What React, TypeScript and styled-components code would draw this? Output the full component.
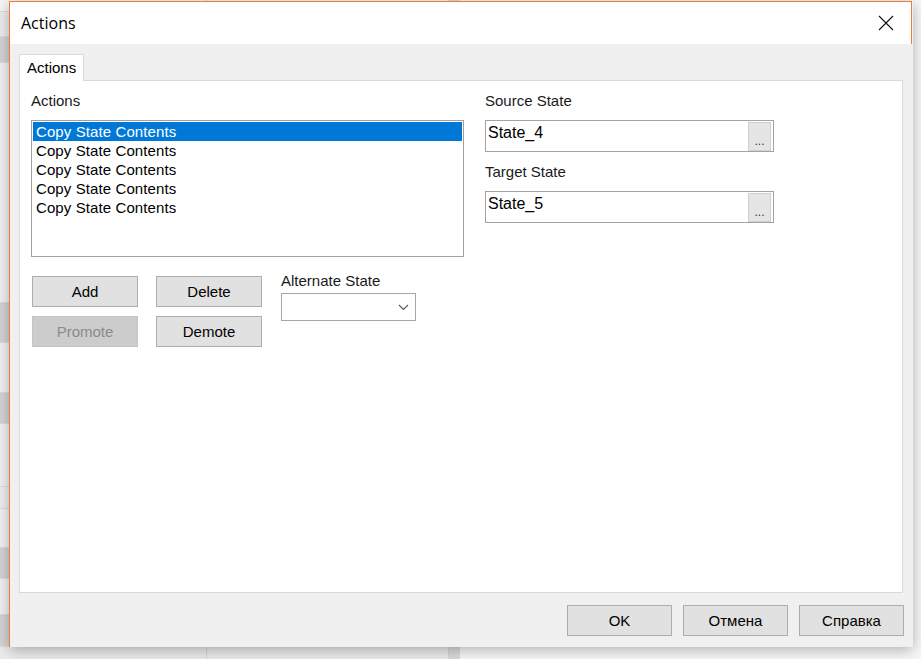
import React from 'react';
import styled, { createGlobalStyle } from 'styled-components';

const GlobalStyle = createGlobalStyle`
  html, body {
    margin: 0;
    padding: 0;
  }
  body {
    font-family: "Liberation Sans", Arial, sans-serif;
    color: #000;
  }
  * {
    box-sizing: border-box;
  }
`;

const Desktop = styled.div`
  position: relative;
  width: 921px;
  height: 659px;
  overflow: hidden;
  background: #f4f4f4;
`;

/* the application window that sits behind the dialog */
const Backdrop = styled.div`
  display: flex;
  height: 100%;
`;

const SidePane = styled.div<{ $w: number }>`
  width: ${({ $w }) => $w}px;
  display: flex;
  flex-direction: column;
  border-right: 1px solid #d6d6d6;
  background: #f3f3f3;
`;

const PaneRow = styled.div<{ $h: number; $tone: string }>`
  height: ${({ $h }) => $h}px;
  flex-shrink: 0;
  background: ${({ $tone }) => $tone};
  border-bottom: 1px solid #dedede;
`;

const Splitter = styled.div`
  width: 11px;
  background: #dcdcdc;
`;

const RightPane = styled.div`
  flex: 1;
  background: #f8f8f8;
`;

const Dialog = styled.div`
  position: absolute;
  left: 9px;
  top: 1px;
  width: 904px;
  height: 646px;
  display: flex;
  flex-direction: column;
  background: #f0f0f0;
  border-left: 1px solid #f07a3a;
  box-shadow: 0 3px 14px rgba(0, 0, 0, 0.3);
`;

const TitleBar = styled.div`
  height: 43px;
  margin-right: 1px;
  display: flex;
  align-items: center;
  justify-content: space-between;
  padding: 0 17px 0 11px;
  background: #fff;
  border-top: 1px solid #f07a3a;
  border-right: 1px solid #f07a3a;
`;

const TitleText = styled.span`
  font-family: "Open Sans", "Noto Sans", sans-serif;
  font-size: 16px;
  color: #000;
`;

const CloseButton = styled.div`
  width: 16px;
  height: 16px;
  display: flex;
  align-items: center;
  justify-content: center;
`;

const Body = styled.div`
  flex: 1;
  display: flex;
  flex-direction: column;
  padding: 10px 9px 11px 9px;
`;

const TabStrip = styled.div`
  display: flex;
  height: 26px;
`;

const Tab = styled.div`
  width: 65px;
  height: 27px;
  padding: 4px 0 0 7px;
  font-size: 15px;
  background: #fff;
  border: 1px solid #d9d9d9;
  border-bottom: none;
  position: relative;
  z-index: 1;
`;

const TabPanel = styled.div`
  flex: 1;
  margin-right: 1px;
  display: flex;
  gap: 21px;
  padding: 11px 11px;
  background: #fff;
  border: 1px solid #d9d9d9;
`;

const Column = styled.div<{ $w: number }>`
  width: ${({ $w }) => $w}px;
  display: flex;
  flex-direction: column;
`;

const Label = styled.div<{ $gap?: number }>`
  font-size: 15px;
  line-height: 17px;
  color: #1a1a1a;
  margin-bottom: ${({ $gap }) => $gap ?? 11}px;
`;

const ListBox = styled.div`
  height: 137px;
  padding: 1px;
  border: 1px solid #9da0a8;
  background: #fff;
`;

const ListItem = styled.div<{ $selected?: boolean }>`
  height: 19px;
  line-height: 19px;
  padding-left: 3px;
  font-size: 15px;
  letter-spacing: 0.1px;
  color: ${({ $selected }) => ($selected ? '#fff' : '#000')};
  background: ${({ $selected }) => ($selected ? '#0078d7' : 'transparent')};
`;

const ControlsRow = styled.div`
  display: flex;
  gap: 19px;
  margin: 19px 0 0 1px;
`;

const ButtonGrid = styled.div`
  display: grid;
  grid-template-columns: 106px 106px;
  column-gap: 18px;
  row-gap: 9px;
`;

const Button = styled.div<{ $disabled?: boolean; $w?: number }>`
  width: ${({ $w }) => $w ?? 105}px;
  height: 31px;
  display: flex;
  align-items: center;
  justify-content: center;
  font-size: 15px;
  color: ${({ $disabled }) => ($disabled ? '#8a8a8a' : '#000')};
  background: ${({ $disabled }) => ($disabled ? '#cccccc' : '#e1e1e1')};
  border: 1px solid ${({ $disabled }) => ($disabled ? '#c4c4c4' : '#adadad')};
`;

const AltGroup = styled.div`
  display: flex;
  flex-direction: column;
  margin-top: -4px;
`;

const ComboBox = styled.div`
  width: 135px;
  height: 28px;
  display: flex;
  align-items: center;
  justify-content: flex-end;
  padding-right: 6px;
  background: #fff;
  border: 1px solid #a6a6a6;
`;

const StateField = styled.div`
  height: 32px;
  display: flex;
  align-items: flex-start;
  justify-content: space-between;
  padding: 1px 2px 0 2px;
  background: #fff;
  border: 1px solid #a3a3a3;
  margin-bottom: 11px;
`;

const StateValue = styled.span`
  font-size: 16px;
  line-height: 19px;
  padding-top: 1px;
`;

const BrowseButton = styled.div`
  width: 23px;
  height: 29px;
  display: flex;
  align-items: flex-end;
  justify-content: center;
  padding-bottom: 3px;
  font-size: 12px;
  line-height: 12px;
  color: #333;
  background: #e5e5e5;
  border: 1px solid #cfcfcf;
`;

const Footer = styled.div`
  display: flex;
  justify-content: flex-end;
  gap: 11px;
  margin-top: 12px;
`;

const items = [
  'Copy State Contents',
  'Copy State Contents',
  'Copy State Contents',
  'Copy State Contents',
  'Copy State Contents',
];

const leftRows: [number, string][] = [
  [12, '#f7f7f7'],
  [25, '#eeeeee'],
  [26, '#d6d6d6'],
  [240, '#f3f3f3'],
  [40, '#d6d6d6'],
  [50, '#f3f3f3'],
  [31, '#d6d6d6'],
  [63, '#f3f3f3'],
  [22, '#f0f0f0'],
  [39, '#f3f3f3'],
  [31, '#d6d6d6'],
  [36, '#f3f3f3'],
  [32, '#d6d6d6'],
  [30, '#ececec'],
];

const midRows: [number, string][] = [
  [12, '#f7f7f7'],
  [635, '#f3f3f3'],
  [30, '#ececec'],
];

const App = () => {
  return (
    <>
      <GlobalStyle />
      <Desktop>
        <Backdrop>
          <SidePane $w={207}>
            {leftRows.map(([h, tone], i) => (
              <PaneRow key={i} $h={h} $tone={tone} />
            ))}
          </SidePane>
          <SidePane $w={242}>
            {midRows.map(([h, tone], i) => (
              <PaneRow key={i} $h={h} $tone={tone} />
            ))}
          </SidePane>
          <Splitter />
          <RightPane />
        </Backdrop>

        <Dialog>
          <TitleBar>
            <TitleText>Actions</TitleText>
            <CloseButton>
              <svg width="16" height="16" viewBox="0 0 16 16">
                <path d="M1 1 L15 15 M15 1 L1 15" stroke="#111" strokeWidth="1.1" />
              </svg>
            </CloseButton>
          </TitleBar>

          <Body>
            <TabStrip>
              <Tab>Actions</Tab>
            </TabStrip>
            <TabPanel>
              <Column $w={433}>
                <Label>Actions</Label>
                <ListBox>
                  {items.map((item, i) => (
                    <ListItem key={i} $selected={i === 0}>
                      {item}
                    </ListItem>
                  ))}
                </ListBox>
                <ControlsRow>
                  <ButtonGrid>
                    <Button $w={106}>Add</Button>
                    <Button $w={106}>Delete</Button>
                    <Button $w={106} $disabled>
                      Promote
                    </Button>
                    <Button $w={106}>Demote</Button>
                  </ButtonGrid>
                  <AltGroup>
                    <Label $gap={4}>Alternate State</Label>
                    <ComboBox>
                      <svg width="11" height="7" viewBox="0 0 11 7">
                        <path d="M1 1 L5.5 5.5 L10 1" fill="none" stroke="#555" strokeWidth="1.1" />
                      </svg>
                    </ComboBox>
                  </AltGroup>
                </ControlsRow>
              </Column>

              <Column $w={289}>
                <Label>Source State</Label>
                <StateField>
                  <StateValue>State_4</StateValue>
                  <BrowseButton>...</BrowseButton>
                </StateField>
                <Label>Target State</Label>
                <StateField>
                  <StateValue>State_5</StateValue>
                  <BrowseButton>...</BrowseButton>
                </StateField>
              </Column>
            </TabPanel>

            <Footer>
              <Button>OK</Button>
              <Button>Отмена</Button>
              <Button>Справка</Button>
            </Footer>
          </Body>
        </Dialog>
      </Desktop>
    </>
  );
};

export default App;
